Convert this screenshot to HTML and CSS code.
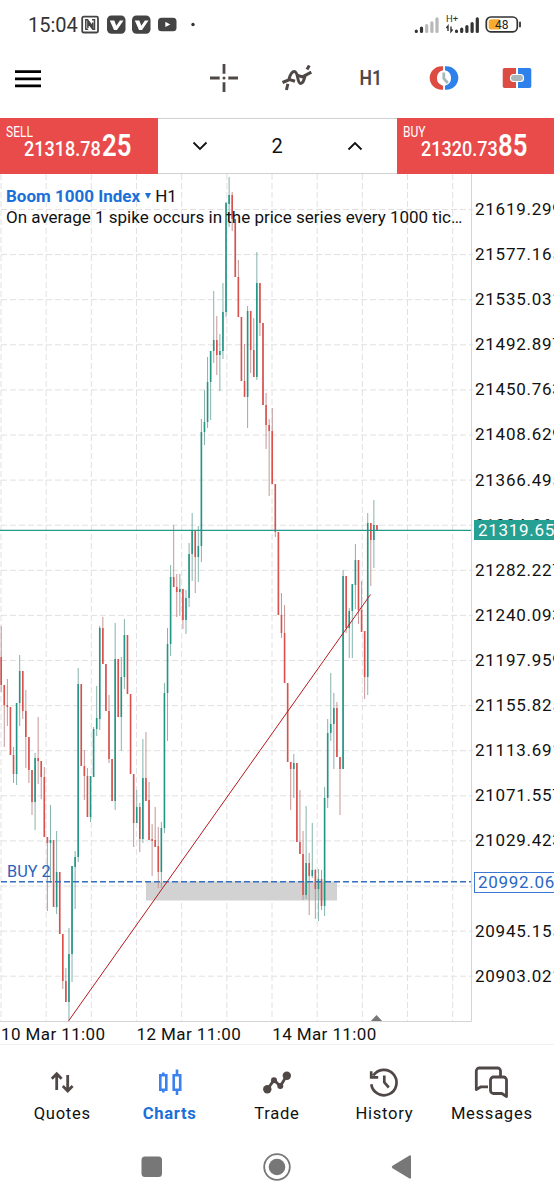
FILE: index.html
```
<!DOCTYPE html>
<html lang="en">
<head>
    <meta charset="UTF-8">
    <meta name="viewport" content="width=device-width, initial-scale=1.0">
    <title>Boom 1000 Index H1</title>
    <link rel="stylesheet" href="styles.css">
</head>
<body>
    <div class="status-bar">
        <span class="time">15:04</span>
        <svg class="notifications" width="116" height="20" viewBox="0 0 116 20">
            <!-- NFC -->
            <rect x="1.2" y="1.7" width="15.8" height="15.8" rx="1.5" fill="none" stroke="#444" stroke-width="1.8"/>
            <path d="M7.200 14.300H4.800V4.800h1.700l5.200 7V7.500M11 4.800h2.500v9.500h-1.700L6.900 7.800V13" fill="none" stroke="#444" stroke-width="1.5"/>
            <!-- V apps -->
            <rect x="26" y="0.5" width="18.5" height="18.3" rx="4.5" fill="#444"/>
            <path d="M28.800 5.500h4.500l2 5.300 3.600-5.300h3.600l-6.500 9.500h-3z" fill="#fff"/>
            <rect x="51" y="0.5" width="18.5" height="18.3" rx="4.5" fill="#444"/>
            <path d="M53.800 5.500h4.500l2 5.300 3.600-5.300h3.600l-6.500 9.500h-3z" fill="#fff"/>
            <!-- Video -->
            <rect x="77" y="2.7" width="18.5" height="13.5" rx="3.5" fill="#444"/>
            <path d="M84.300 6.700l5 2.700-5 2.700z" fill="#fff"/>
            <circle cx="112" cy="9.5" r="1.7" fill="#333"/>
        </svg>
        <svg class="signals" width="112" height="24" viewBox="0 0 112 24">
            <g stroke-width="3.2" stroke-linecap="round">
                <path d="M3.300 17.500v-.3M8.500 17.500v-3.500" stroke="#333"/>
                <path d="M13.700 17.500v-6M18.900 17.500v-8.600M24 17.500V4.800" stroke="#b8b8b8"/>
                <path d="M43.500 17.500v-.3M48.700 17.500v-2.500M53.900 17.500v-5M59.100 17.500v-8M64.300 17.500V4.800" stroke="#333"/>
            </g>
            <text class="network" x="33" y="8">H+</text>
            <path d="M35 17v-5l-1.600 2M38 12.500v5l1.600-2" fill="none" stroke="#333" stroke-width="1.4"/>
            <rect x="73.3" y="3" width="31" height="14.8" rx="4.5" fill="#fff" stroke="#333" stroke-width="1.7"/>
            <path d="M78 5.300H86.500v10.200H78a2.300 2.300 0 0 1-2.300-2.300V7.600a2.300 2.300 0 0 1 2.300-2.300z" fill="#f9ab2f"/>
            <path d="M107 8.500v4" stroke="#333" stroke-width="1.8" stroke-linecap="round"/>
            <text class="battery" x="88.8" y="14.6">48</text>
        </svg>
    </div>

    <div class="toolbar">
        <svg class="menu" width="26" height="18" viewBox="0 0 26 18">
            <path d="M0 1.700h26M0 8.800h26M0 15.900h26" stroke="#000" stroke-width="2.8"/>
        </svg>
        <div class="tools">
            <!-- Crosshair -->
            <svg width="30" height="30" viewBox="0 0 30 30">
                <path d="M15 1v9.700M15 19.300V29M1 15h9.700M19.300 15H29" stroke="#504846" stroke-width="2.8"/>
                <circle cx="15" cy="15" r="1.5" fill="#504846"/>
            </svg>
            <!-- Indicators -->
            <svg width="32" height="30" viewBox="0 0 32 30">
                <path d="M5.400 27l1.500-6.200M8 16c1.300-4.500 3-7.500 5.200-7.500 4.600 0 2.500 12 6.500 12 2.700 0 3.500-4.600 4.800-9M26 6.500l2.300-4M1.500 19.500L8.500 16.500l5.500 1.800M17 12.500l4.500 1.400 8.800-4.800" fill="none" stroke="#504846" stroke-width="3"/>
            </svg>
            <span class="timeframe">H1</span>
            <!-- Pending order -->
            <svg width="30" height="26" viewBox="0 0 30 26">
                <path d="M14 1.300h-1.500a11.800 11.700 0 0 0 0 23.400H14v-4a8.300 8 0 0 1 0-15.400z" fill="#dc4c43"/>
                <path d="M16 1.300h1.500a11.800 11.700 0 0 1 0 23.400H16v-4a8.300 8 0 0 0 0-15.400z" fill="#2e80ea"/>
                <path d="M14.800 7.500v6l4 4.500" fill="none" stroke="#a9b7bb" stroke-width="2.8"/>
            </svg>
            <!-- New order -->
            <svg width="30" height="22" viewBox="0 0 30 22">
                <path d="M2.500 1H14v20H2.500A1.800 1.800 0 0 1 .7 19.200V2.800A1.800 1.800 0 0 1 2.500 1z" fill="#dc4c43"/>
                <path d="M16 1h11.500a1.800 1.800 0 0 1 1.800 1.800v16.400a1.800 1.800 0 0 1-1.800 1.800H16z" fill="#2e80ea"/>
                <rect x="8.5" y="7.5" width="13" height="7" rx="3" fill="#a9b7bb" stroke="#fff" stroke-width="1.2"/>
            </svg>
        </div>
    </div>

    <div class="trade-panel">
        <div class="side sell">
            <span class="side-name">SELL</span>
            <div class="quote"><span class="small">21318.78</span><span class="big">25</span></div>
        </div>
        <div class="volume">
            <svg width="16" height="10" viewBox="0 0 16 10"><path d="M1.500 1.500L8 8l6.500-6.500"/></svg>
            <span>2</span>
            <svg width="16" height="10" viewBox="0 0 16 10"><path d="M1.500 8.500L8 2l6.500 6.500"/></svg>
        </div>
        <div class="side buy">
            <span class="side-name">BUY</span>
            <div class="quote"><span class="small">21320.73</span><span class="big">85</span></div>
        </div>
    </div>

    <div class="chart">
        <svg class="plot" width="473" height="848" viewBox="0 174 473 848">
            <g id="grid"></g>
            <rect x="146" y="881.5" width="191" height="19" fill="#d2d2d2"/>
            <g id="candles"></g>
            <path d="M0 530.400H472" stroke="#26998c" stroke-width="1.3"/>
            <path d="M1 881.800H472" stroke="#3470bd" stroke-width="1.6" stroke-dasharray="6 3"/>
            <path d="M68.500 1021L370.500 594.500" stroke="#b7191f" stroke-width="1"/>
            <path d="M369.500 1022.500l7-7.500 7 7.500z" fill="#777"/>
            <path d="M0 1021.500H471.500V174" fill="none" stroke="#d4d4d4"/>
            <text class="position" x="7" y="877">BUY 2</text>
        </svg>
        <div class="prices" id="prices"></div>
        <div class="title">
            <div><b>Boom 1000 Index</b><i></i>H1</div>
            <div class="description">On average 1 spike occurs in the price series every 1000 tic…</div>
        </div>
        <span class="tag bid">21319.65</span>
        <span class="tag entry">20992.06</span>
    </div>

    <div class="dates">
        <span>10 Mar 11:00</span>
        <span>12 Mar 11:00</span>
        <span>14 Mar 11:00</span>
    </div>

    <div class="tabs">
        <div class="tab">
            <svg width="34" height="34" viewBox="0 0 34 34">
                <path d="M11.700 25V9.700M6.800 13.700l4.900-4.900 4.900 4.900M22.700 10v14.500M17.800 21l4.900 4.900 4.900-4.900"/>
            </svg>
            <span>Quotes</span>
        </div>
        <div class="tab active">
            <svg width="34" height="34" viewBox="0 0 34 34">
                <path d="M7.300 10.300h6v14.500h-6zM10.300 10V7.500M10.300 25v2.500M20.700 10.300h6.500v14.500h-6.500zM24 10V4.500M24 25v5" stroke-width="2.6"/>
            </svg>
            <span>Charts</span>
        </div>
        <div class="tab">
            <svg width="34" height="34" viewBox="0 0 34 34">
                <path d="M7.300 24.500L14 15l6.300 6.200L26.500 11"/>
                <g class="dots"><circle cx="7.3" cy="24.3" r="4.2"/><circle cx="14" cy="15.2" r="3"/><circle cx="20.3" cy="21" r="3"/><circle cx="26.8" cy="10.7" r="4.2"/></g>
            </svg>
            <span>Trade</span>
        </div>
        <div class="tab">
            <svg width="34" height="34" viewBox="0 0 34 34">
                <path d="M4.300 19.300A12.700 12.700 0 1 0 6.300 10.500M4.200 6.300v6h7M17.300 10.500v6.800l4.500 5.200" stroke-width="2.7"/>
            </svg>
            <span>History</span>
        </div>
        <div class="tab">
            <svg width="36" height="34" viewBox="0 0 36 34">
                <path d="M14 21.800H7l-4.700 2.700V6a3 3 0 0 1 3-3H23.500a3 3 0 0 1 3 3v5M19.500 12H29.500a3 3 0 0 1 3 3v16.500l-4.600-3H19.500a3 3 0 0 1-3-3V15a3 3 0 0 1 3-3z" stroke-linejoin="round"/>
            </svg>
            <span>Messages</span>
        </div>
    </div>

    <div class="system-bar">
        <svg width="30" height="30" viewBox="0 0 30 30"><rect x="4.5" y="4.5" width="20.5" height="20.5" rx="3.5"/></svg>
        <svg width="30" height="30" viewBox="0 0 30 30"><circle cx="15" cy="15" r="12.8" fill="none" stroke="#777" stroke-width="1.8"/><circle cx="15" cy="15" r="8.3"/></svg>
        <svg width="30" height="30" viewBox="0 0 30 30"><path d="M5.500 13.800L22.500 3.500q1.500-.6 1.500 1v21q0 1.600-1.500 1L5.500 16.200q-1.500-1.200 0-2.400z"/></svg>
    </div>

    <script>
        const NS = 'http://www.w3.org/2000/svg';
        const grid = document.getElementById('grid');
        const candles = document.getElementById('candles');
        const prices = document.getElementById('prices');

        function addLine(parent, x1, y1, x2, y2, cls) {
            const line = document.createElementNS(NS, 'line');
            line.setAttribute('x1', x1);
            line.setAttribute('y1', y1);
            line.setAttribute('x2', x2);
            line.setAttribute('y2', y2);
            line.setAttribute('class', cls);
            parent.appendChild(line);
        }

        // Price scale, top to bottom (the blank one is behind the entry tag)
        const labels = ['21619.299', '21577.165', '21535.031', '21492.897', '21450.763', '21408.629',
            '21366.495', '21324.361', '21282.227', '21240.093', '21197.959', '21155.825',
            '21113.691', '21071.557', '21029.423', '', '20945.155', '20903.021'];

        labels.forEach((label, i) => {
            const y = 209.5 + i * 45.1;
            addLine(grid, 1, y, 477, y, 'grid-line');
            const div = document.createElement('div');
            div.textContent = label;
            prices.appendChild(div);
        });
        for (let i = 0; i < 11; i++) {
            const x = 1 + i * 45.17;
            addLine(grid, x, 174, x, 1021, 'grid-line');
        }

        // direction, high, body top, body bottom, low
        const data = `r 626 657 685 692|r 685 685 705 747|r 679 705 707 726|r 707 707 755 755|r 747 755 774 783
            |g 703 703 774 785|g 655 671 703 726|r 671 671 711 719|r 690 711 737 768|r 737 737 770 783
            |r 770 770 802 815|g 753 758 802 830|r 717 758 761 784|r 761 761 777 799|r 767 777 837 837
            |r 837 837 843 911|g 805 840 843 883|r 840 840 907 907|g 831 872 907 914|r 872 872 934 934
            |r 934 934 981 989|r 968 981 1002 1002|g 928 954 1002 1020|g 866 866 954 982|g 851 857 867 909
            |g 668 684 857 862|r 684 684 766 766|r 750 766 776 800|r 768 776 817 817|g 776 776 817 822
            |g 727 729 777 777|g 686 718 729 736|g 626 628 719 730|r 617 628 664 664|r 664 664 711 711
            |r 695 711 759 763|r 759 759 801 801|g 623 659 801 810|r 659 659 717 717|g 657 677 717 751
            |g 619 635 677 689|r 635 635 694 694|r 694 694 774 774|r 774 774 823 847|g 790 807 823 823
            |r 803 807 839 852|g 739 778 839 843|r 732 778 801 801|r 782 800 840 840|r 824 839 841 876
            |r 807 840 847 847|r 827 846 872 888|g 822 828 872 888|g 683 693 828 833|g 628 644 693 741
            |g 565 577 644 656|r 525 577 587 587|r 574 587 592 617|g 574 589 592 616|r 589 589 620 629
            |g 590 598 620 634|g 543 554 598 607|g 513 530 554 581|r 530 530 557 593|g 526 546 557 582
            |g 419 432 546 562|g 390 422 432 445|g 357 382 422 428|g 351 351 382 420|g 291 340 351 363
            |r 316 340 355 375|g 334 351 355 391|g 283 312 351 359|g 202 203 312 317|g 177 195 204 227
            |r 192 195 219 231|r 219 219 277 277|r 260 277 317 317|r 317 317 381 381|r 344 381 397 397
            |g 306 311 397 428|r 311 311 350 373|r 318 350 377 377|g 252 283 377 380|r 283 283 323 336
            |r 323 323 405 405|r 393 405 425 449|r 419 425 431 496|r 408 431 484 484|r 484 484 532 537
            |r 532 532 615 615|r 593 615 633 638|r 605 633 683 683|r 683 683 762 762|r 762 762 769 810
            |g 754 763 769 798|r 763 763 842 842|r 790 842 854 854|r 831 854 895 900|g 806 863 895 899
            |r 853 863 876 915|g 823 870 876 878|r 869 870 889 919|g 869 879 889 921|r 870 879 906 910
            |g 787 798 906 916|g 719 733 798 808|g 673 724 733 741|g 693 708 724 769|r 702 708 757 757
            |r 757 757 769 815|g 570 576 769 769|r 576 576 628 633|g 608 611 628 658|g 584 584 611 658
            |g 544 560 585 609|r 560 560 610 624|r 581 610 632 632|r 631 631 677 699|g 513 523 677 695
            |r 523 523 540 586|g 500 525 540 568|r 525 525 530 530`;

        data.split('|').forEach((row, i) => {
            const [dir, high, top, bottom, low] = row.trim().split(' ');
            const x = 1.2 + i * 3.08;
            addLine(candles, x, high, x, low, 'wick ' + dir);
            addLine(candles, x, top, x, bottom, 'candle ' + dir);
        });
    </script>
</body>
</html>
```
FILE: styles.css
```
body {
    margin: 0;
    width: 554px;
    height: 1200px;
    overflow: hidden;
    background: #fff;
    color: #111;
    font-family: Roboto, "Liberation Sans", sans-serif;
}

svg {
    display: block;
    flex: none;
}

.status-bar {
    height: 44px;
    padding: 4px 29px 0 28px;
    box-sizing: border-box;
    display: flex;
    align-items: center;
}

.time {
    width: 53px;
    font-size: 20px;
    color: #333;
    padding-top: 1px;
}

.notifications {
    margin-top: 1px;
}

.signals {
    margin-left: auto;
    margin-top: 3px;
}

.network {
    font-size: 9.5px;
    fill: #333;
}

.battery {
    font-size: 12px;
    text-anchor: middle;
    fill: #222;
}

.toolbar {
    height: 74px;
    padding-left: 15px;
    display: flex;
    align-items: center;
    justify-content: space-between;
}

.menu {
    margin-top: -5px;
}

.tools {
    width: 367px;
    height: 69px;
    margin-bottom: 6px;
    display: grid;
    grid-template-columns: repeat(5, 1fr);
    align-items: center;
    justify-items: center;
}

.timeframe {
    font-size: 20px;
    font-weight: 600;
    color: #504846;
    transform: scaleX(0.88);
}

.trade-panel {
    height: 56px;
    display: flex;
}

.side {
    width: 157.5px;
    background: #e94b4b;
    color: #fff;
    box-sizing: border-box;
    padding: 6px 0 0 6px;
}

.side-name {
    display: block;
    font-size: 14px;
    line-height: 16px;
    transform: scaleX(0.86);
    transform-origin: left;
}

.quote {
    display: flex;
    align-items: baseline;
    height: 30px;
    margin: -12px 0 0 18px;
    line-height: 36px;
}

.small {
    width: 77.5px;
    font-size: 20px;
    font-weight: 500;
    transform: scaleX(0.9);
    transform-origin: left;
    white-space: nowrap;
}

.big {
    font-size: 31px;
    font-weight: 600;
    transform: scaleX(0.83);
    transform-origin: left;
}

.volume {
    flex: 1;
    border-top: 1px solid #d0d0d0;
    border-bottom: 1px solid #d0d0d0;
    display: flex;
    align-items: center;
    justify-content: space-between;
    padding: 0 34px;
    font-size: 20px;
}

.volume path {
    fill: none;
    stroke: #111;
    stroke-width: 1.8;
}

.chart {
    position: relative;
    display: flex;
    height: 848px;
}

.grid-line {
    stroke: #e2e0e2;
    stroke-width: 1;
    stroke-dasharray: 6 3;
}

.wick {
    stroke-width: 0.9;
}

.candle {
    stroke-width: 1.6;
}

.r {
    stroke: #d9504c;
}

.g {
    stroke: #229585;
}

.wick.r {
    stroke: #c08a8a;
}

.wick.g {
    stroke: #78aaa2;
}

.position {
    font-size: 16.3px;
    fill: #2b62bd;
}

.prices {
    padding: 13px 0 0 2px;
    width: 79px;
    overflow: hidden;
    font-size: 17px;
    letter-spacing: 0.75px;
    line-height: 45.1px;
    white-space: nowrap;
}

.prices div {
    height: 45.1px;
}

.title {
    position: absolute;
    left: 6px;
    top: 12px;
    font-size: 17px;
    line-height: 21px;
    white-space: nowrap;
}

.title b {
    font-weight: 700;
    color: #1b6fd8;
}

.title i {
    display: inline-block;
    margin: 0 4px 3px 5px;
    border: 3px solid transparent;
    border-top: 6px solid #1b6fd8;
    border-bottom: 0;
}

.tag {
    position: absolute;
    left: 474px;
    width: 90px;
    height: 20px;
    padding-left: 4px;
    box-sizing: border-box;
    font-size: 17px;
    line-height: 20px;
    letter-spacing: 0.7px;
}

.bid {
    top: 346px;
    background: #26a092;
    color: #fff;
}

.entry {
    top: 698px;
    height: 21px;
    padding-left: 3px;
    line-height: 19px;
    background: #fff;
    border: 1px solid #3a78d4;
    color: #2b68c4;
}

.dates {
    height: 22px;
    padding-left: 1px;
    display: flex;
    border-bottom: 1px solid #f0f0f0;
    font-size: 17px;
    line-height: 24px;
    letter-spacing: 0.4px;
}

.dates span {
    width: 135.6px;
}

.tabs {
    height: 85px;
    padding: 20px 8.5px 0;
    box-sizing: border-box;
    display: grid;
    grid-template-columns: repeat(5, 1fr);
}

.tab {
    display: flex;
    flex-direction: column;
    align-items: center;
    gap: 5px;
    font-size: 16.6px;
    line-height: 20px;
    letter-spacing: 0.7px;
}

.tab svg {
    fill: none;
    stroke: #504846;
    stroke-width: 2.8;
}

.tab .dots {
    fill: #504846;
    stroke: none;
}

.active {
    color: #1b6fd8;
    font-weight: 700;
}

.active svg {
    stroke: #3b82f0;
}

.system-bar {
    width: 375px;
    height: 74px;
    margin: 0 auto;
    display: grid;
    grid-template-columns: repeat(3, 1fr);
    justify-items: center;
    align-items: center;
    fill: #777;
}
```
